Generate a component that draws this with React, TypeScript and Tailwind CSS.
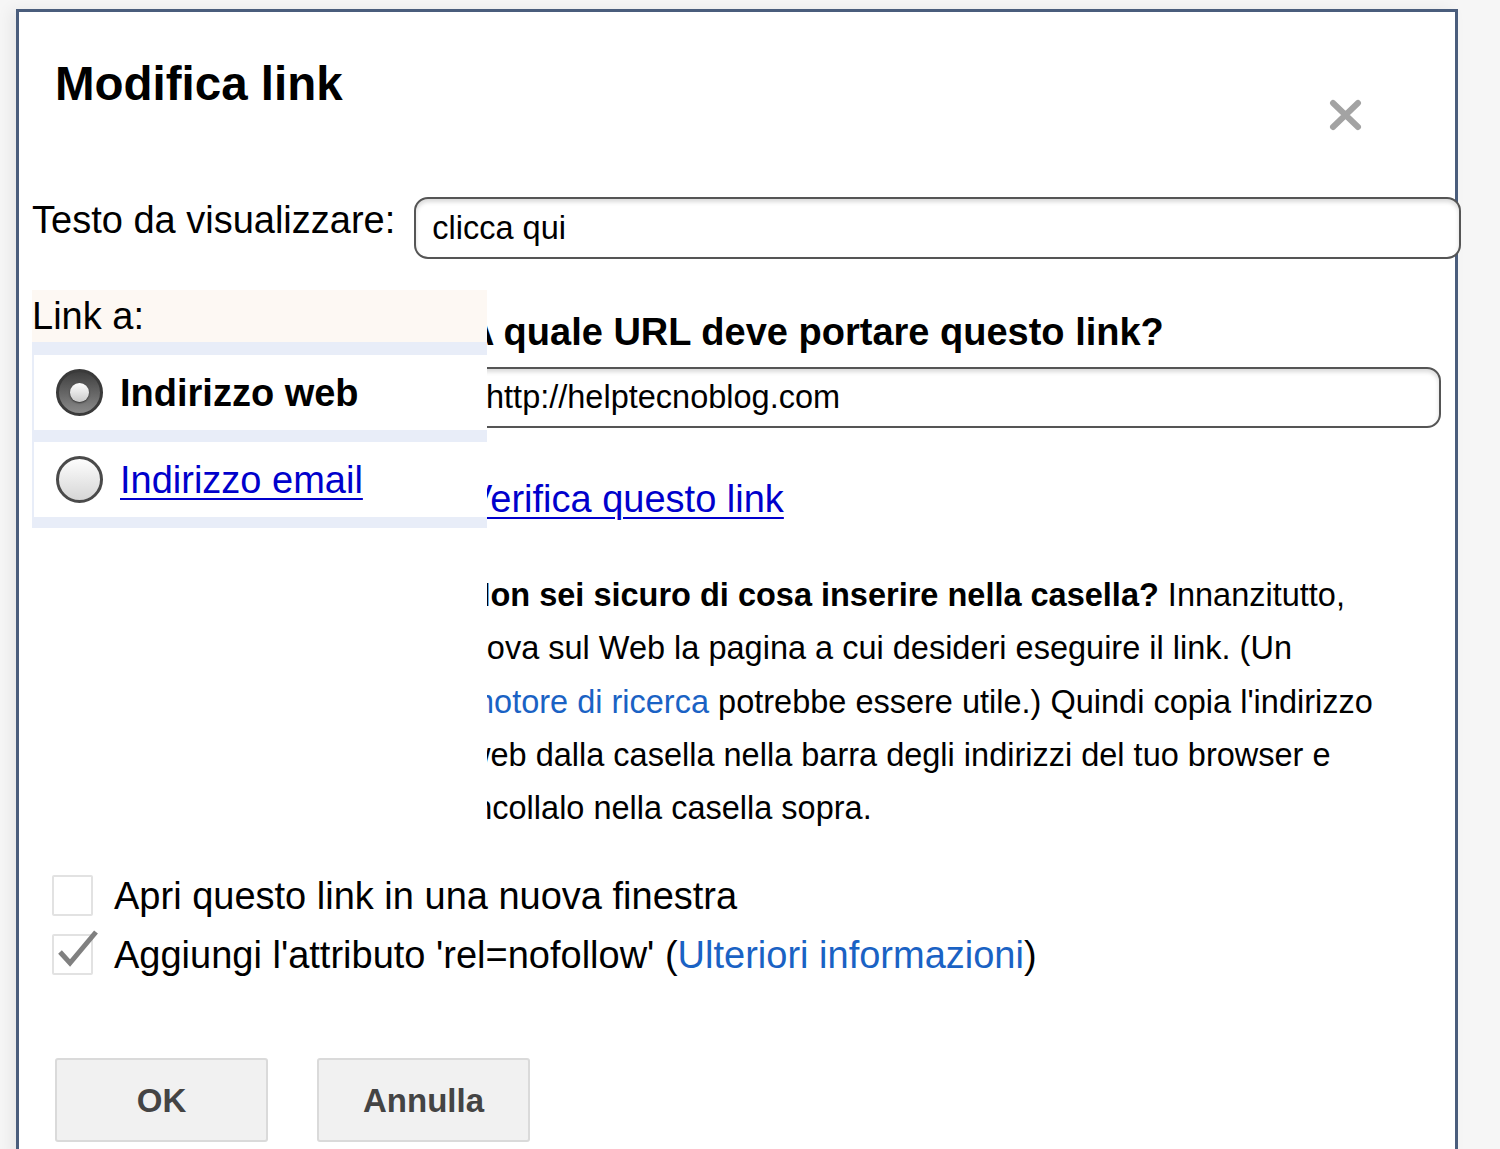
export default function App() {
  return (
    <div className="h-[1149px] w-[1500px] overflow-hidden bg-[#f6f6f6] pt-[9px] font-['Liberation_Sans',Arial,sans-serif] text-black">
      <div className="relative ml-[16px] h-[1150px] w-[1442px] border-x-[3px] border-t-[3px] border-[#4a5d7c] bg-white shadow-[-6px_0_14px_rgba(0,0,0,0.06)]">
        {/* Header */}
        <div className="flex h-[185px] items-start justify-between">
          <h2 className="pl-[36px] pt-[44px] text-[47.5px] font-bold leading-[56px]">Modifica link</h2>
          <svg className="mr-[92px] mt-[87px] blur-[0.6px]" width="35" height="32" viewBox="0 0 35 32">
            <path d="M5 4 L30 28 M30 4 L5 28" stroke="#a3a3a3" strokeWidth="6" strokeLinecap="round" />
          </svg>
        </div>

        {/* Testo da visualizzare */}
        <div className="flex items-start pl-[13px]">
          <label className="mt-[1px] shrink-0 whitespace-nowrap text-[38px] leading-[44px]">Testo da visualizzare:</label>
          <div className="ml-[19px] flex h-[62px] w-[1047px] shrink-0 items-center rounded-[14px] border-2 border-[#555] bg-white pl-[16px] text-[32.5px] shadow-[inset_0_3px_4px_rgba(0,0,0,0.15)]">
            clicca qui
          </div>
        </div>

        {/* Link a */}
        <div className="mt-[31px] flex items-stretch pl-[13px]">
          <div className="relative z-10 w-[455px] shrink-0 bg-white">
            <div className="h-[52px] bg-[#fdf8f3] text-[38px] leading-[52px]">Link a:</div>
            <div className="flex flex-col gap-[12px] bg-[#e8edf8] pb-[11px] pl-[2px] pt-[13px]">
              <div className="flex h-[75px] items-center gap-[17px] bg-white pl-[22px]">
                <div className="flex h-[47px] w-[47px] items-center justify-center rounded-full border-[3px] border-[#3a3a3a] bg-[linear-gradient(#3f3f3f,#8a8a8a)]">
                  <div className="h-[19px] w-[19px] rounded-full bg-[linear-gradient(#ffffff,#c9c9c9)] shadow-[0_1px_2px_rgba(0,0,0,0.6)]" />
                </div>
                <span className="text-[38px] font-bold leading-[44px]">Indirizzo web</span>
              </div>
              <div className="flex h-[75px] items-center gap-[17px] bg-white pl-[22px]">
                <div className="h-[47px] w-[47px] rounded-full border-[3px] border-[#4a4a4a] bg-[linear-gradient(#fdfdfd,#d6d6d6)]" />
                <span className="text-[38px] leading-[44px] text-[#0000cc] underline decoration-[2px] underline-offset-[5px]">Indirizzo email</span>
              </div>
            </div>
          </div>

          <div className="-ml-[20px] mt-[20px] w-[975px] shrink-0">
            <h3 className="whitespace-nowrap text-[38px] font-bold leading-[44px]">A quale URL deve portare questo link?</h3>
            <div className="mt-[13px] flex h-[61px] w-[974px] items-center rounded-[14px] border-2 border-[#555] bg-white pl-[17px] text-[32.5px] shadow-[inset_0_3px_4px_rgba(0,0,0,0.15)]">
              http://helptecnoblog.com
            </div>
            <div className="mt-[49px] text-[38px] leading-[44px]">
              <span className="text-[#0000cc] underline decoration-[2px] underline-offset-[5px]">Verifica questo link</span>
            </div>
            <p className="mt-[48px] whitespace-nowrap text-[32.5px] leading-[53.3px]">
              <b>Non sei sicuro di cosa inserire nella casella?</b> Innanzitutto,
              <br />
              trova sul Web la pagina a cui desideri eseguire il link. (Un
              <br />
              <span className="text-[#1a62c4]">motore di ricerca</span> potrebbe essere utile.) Quindi copia l'indirizzo
              <br />
              web dalla casella nella barra degli indirizzi del tuo browser e
              <br />
              incollalo nella casella sopra.
            </p>
          </div>
        </div>

        {/* Checkboxes */}
        <div className="mt-[31px] pl-[33px]">
          <div className="flex h-[59px] items-center">
            <div className="h-[41px] w-[41px] rounded-[2px] border-2 border-[#e2e2e2] bg-white" />
            <span className="ml-[21px] whitespace-nowrap text-[38px] leading-[44px]">Apri questo link in una nuova finestra</span>
          </div>
          <div className="flex h-[59px] items-center">
            <div className="relative h-[41px] w-[41px] rounded-[2px] border-2 border-[#e2e2e2] bg-white">
              <svg className="absolute -top-[6px] left-[2px]" width="44" height="40" viewBox="0 0 44 40">
                <path d="M4 22 L14 33 L40 2" fill="none" stroke="#808080" strokeWidth="5" strokeLinejoin="miter" />
              </svg>
            </div>
            <span className="ml-[21px] whitespace-nowrap text-[38px] leading-[44px]">
              Aggiungi l'attributo 'rel=nofollow' (<span className="text-[#1a62c4]">Ulteriori informazioni</span>)
            </span>
          </div>
        </div>

        {/* Buttons */}
        <div className="mt-[74px] flex gap-[49px] pl-[36px]">
          <button className="h-[84px] w-[213px] rounded-[3px] border-2 border-[#dadada] bg-[#f1f1f1] text-[33px] font-bold text-[#444]">
            OK
          </button>
          <button className="h-[84px] w-[213px] rounded-[3px] border-2 border-[#dadada] bg-[#f1f1f1] text-[33px] font-bold text-[#444]">
            Annulla
          </button>
        </div>
      </div>
    </div>
  )
}
